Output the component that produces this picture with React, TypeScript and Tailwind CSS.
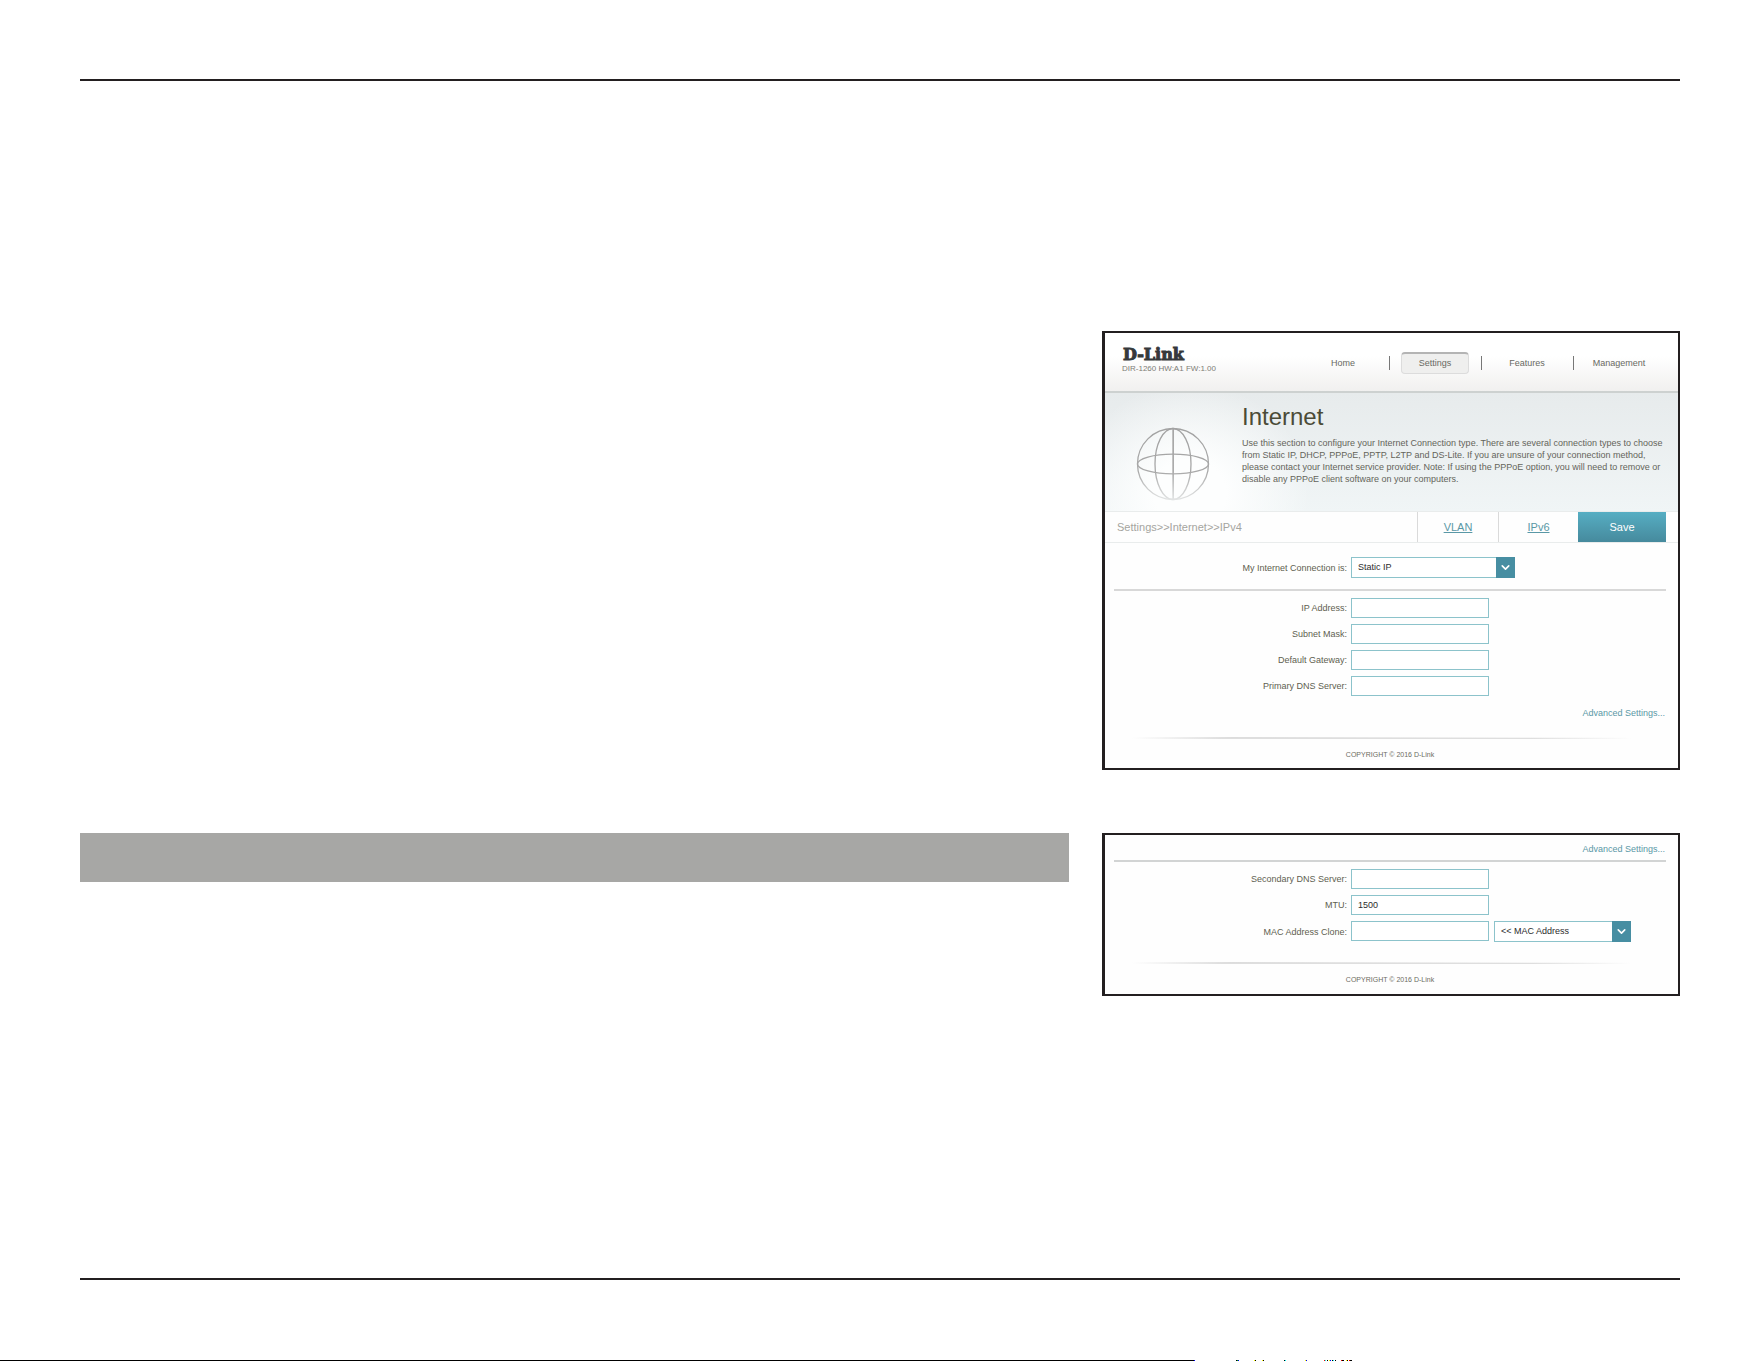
import type { ReactNode } from "react";
import { ChevronDown } from "lucide-react";

const navItems = ["Home", "Settings", "Features", "Management"];

const specks = [
  { x: 0, w: 1, fill: "#0000ff" },
  { x: 42, w: 1, fill: "#000000" },
  { x: 43, w: 1, fill: "#00a000" },
  { x: 44, w: 1, fill: "#0000ff" },
  { x: 60, w: 1, fill: "#ffff00" },
  { x: 61, w: 1, fill: "#000000" },
  { x: 68, w: 1, fill: "#ffff00" },
  { x: 69, w: 1, fill: "#000000" },
  { x: 90, w: 1, fill: "#000000" },
  { x: 91, w: 1, fill: "#00ffff" },
  { x: 111, w: 1, fill: "#ffff00" },
  { x: 112, w: 1, fill: "#0000ff" },
  { x: 130, w: 1, fill: "#ff0000" },
  { x: 131, w: 1, fill: "#00ffff" },
  { x: 133, w: 1, fill: "#000000" },
  { x: 135, w: 1, fill: "#ffff00" },
  { x: 136, w: 1, fill: "#0000ff" },
  { x: 138, w: 1, fill: "#000000" },
  { x: 139, w: 1, fill: "#00ffff" },
  { x: 141, w: 1, fill: "#000000" },
  { x: 147, w: 1, fill: "#ff0000" },
  { x: 148, w: 2, fill: "#000000" },
  { x: 152, w: 1, fill: "#ffff00" },
  { x: 153, w: 1, fill: "#000000" },
  { x: 155, w: 1, fill: "#ff0000" },
  { x: 156, w: 2, fill: "#000000" },
];

const Globe = () => (
  <svg viewBox="0 0 74 74" className="size-[74px]" fill="none" aria-hidden="true">
    <defs>
      <linearGradient id="globe" gradientUnits="userSpaceOnUse" x1="0" y1="0" x2="0" y2="74">
        <stop offset="0" stopColor="#a2a2a2" />
        <stop offset="0.6" stopColor="#a8a8a8" />
        <stop offset="1" stopColor="#e4e6e6" />
      </linearGradient>
    </defs>
    <g stroke="url(#globe)" strokeWidth="1.3">
      <circle cx="37" cy="37" r="35.5" />
      <ellipse cx="37" cy="37" rx="18" ry="35.5" />
      <ellipse cx="37" cy="37" rx="35.5" ry="9.8" />
      <path d="M37 1.5V72.5M37.3 1.5V72.5" />
    </g>
  </svg>
);

const Panel = ({ children }: { children: ReactNode }) => (
  <section className="border-2 border-l-3 border-[#231f20] bg-[#fefefe]">{children}</section>
);

const SelectBox = ({ id, value, className }: { id: string; value: string; className: string }) => (
  <div className={`relative h-[21px] ${className}`}>
    <select
      id={id}
      aria-label={value}
      className="block h-full w-full appearance-none border border-[#8cc3cb] bg-white pl-[6px] text-[9px] text-[#2c2c2c]"
    >
      <option>{value}</option>
    </select>
    <span className="pointer-events-none absolute inset-y-0 right-0 flex w-[19px] items-center justify-center bg-[#478ea2]">
      <ChevronDown size={13} strokeWidth={3} className="text-white" />
    </span>
  </div>
);

const Row = ({ id, label, children }: { id: string; label: string; children: ReactNode }) => (
  <div className="flex items-center">
    <label htmlFor={id} className="w-[242px] text-right text-[9px] leading-3 text-[#5f5f50]">
      {label}
    </label>
    <div className="ml-1 flex gap-[5px]">{children}</div>
  </div>
);

const TextField = ({ id, label, value = "", children }: { id: string; label: string; value?: string; children?: ReactNode }) => (
  <Row id={id} label={label}>
    <input
      id={id}
      type="text"
      defaultValue={value}
      className="h-5 w-[138px] border border-[#8cc3cb] bg-white px-[6px] text-[9px] text-[#2c2c2c]"
    />
    {children}
  </Row>
);

const Copyright = () => (
  <footer className="pl-[27px] pr-[46px]">
    <div className="h-px bg-linear-to-r from-transparent via-[#dcdcdc] via-20% to-transparent" />
    <div className="h-px bg-[linear-gradient(to_right,transparent,#dedede_18%,#dedede_80%,transparent)]" />
    <p className="mt-[11px] pl-4 text-center text-[7px] leading-[10px] text-[#6c6c62]">COPYRIGHT © 2016 D-Link</p>
  </footer>
);

const AdvancedLink = () => (
  <a href="#advanced" className="block pr-[13px] text-right text-[9px] leading-3 text-[#5a98a6]">
    Advanced Settings...
  </a>
);

const InternetPanel = () => (
  <Panel>
    <header className="flex h-[60px] justify-between border-b-2 border-[#cdd1d0] bg-linear-to-b from-white from-40% to-[#f1f0ef] pr-[13px]">
      <div className="pl-[17px] pt-[14px]">
        <div className="pl-px font-['DejaVu_Serif','Liberation_Serif',serif] text-[16px] font-bold leading-4 text-[#36393b] [-webkit-text-stroke:1px_#36393b]">
          D-Link
        </div>
        <div className="mt-px text-[8px] leading-[10px] text-[#7d7d76]">DIR-1260 HW:A1 FW:1.00</div>
      </div>
      <nav className="flex h-[60px] items-center">
        {navItems.map((item, i) => (
          <div key={item} className="relative flex w-[92px] justify-center">
            {i > 0 && <span className="absolute left-0 top-1 h-[14px] w-px bg-[#777]" />}
            <a
              href="#nav"
              className={`flex h-[22px] w-[68px] items-center justify-center text-[9px] leading-3 text-[#696962] ${
                item === "Settings" ? "rounded-sm border border-t-2 border-[#dcdcdc] border-t-[#b4b4b4] bg-[#efefee] pb-px" : ""
              }`}
            >
              {item}
            </a>
          </div>
        ))}
      </nav>
    </header>
    <div className="flex h-[118px] bg-[radial-gradient(ellipse_120px_110px_at_85px_100px,#fdfefe_30%,#fdfefe00),linear-gradient(to_bottom,#e7ebec,#f0f5f6)]">
      <div className="w-[137px] shrink-0 pl-[31px] pt-[34px]">
        <Globe />
      </div>
      <div className="pr-3 pt-[10px]">
        <h1 className="text-[24px] leading-7 text-[#4b4b37]">Internet</h1>
        <p className="mt-[6px] text-[9px] leading-3 text-[#64645a]">
          Use this section to configure your Internet Connection type. There are several connection types to choose
          from Static IP, DHCP, PPPoE, PPTP, L2TP and DS-Lite. If you are unsure of your connection method, please
          contact your Internet service provider. Note: If using the PPPoE option, you will need to remove or disable
          any PPPoE client software on your computers.
        </p>
      </div>
    </div>
    <div className="flex h-8 items-stretch border-y border-[#e9ecec] pr-3 text-[11px]">
      <span className="flex flex-1 items-center pl-3 text-[#a5a5a0]">Settings&gt;&gt;Internet&gt;&gt;IPv4</span>
      <a href="#vlan" className="flex w-[81px] items-center justify-center border-l border-[#dadada] text-[#5a98a6] underline">
        VLAN
      </a>
      <a href="#ipv6" className="flex w-[80px] items-center justify-center border-l border-[#dadada] text-[#5a98a6] underline">
        IPv6
      </a>
      <button type="button" className="w-[88px] bg-linear-to-b from-[#56aec3] to-[#468a9d] text-white">
        Save
      </button>
    </div>
    <div className="pt-[14px]">
      <Row id="connection" label="My Internet Connection is:">
        <SelectBox id="connection" value="Static IP" className="w-[164px]" />
      </Row>
    </div>
    <div className="ml-[9px] mr-3 mt-[11px] h-[2px] bg-[#d8d8d8]" />
    <div className="flex flex-col gap-[6px] pt-[7px]">
      <TextField id="ip" label="IP Address:" />
      <TextField id="subnet" label="Subnet Mask:" />
      <TextField id="gateway" label="Default Gateway:" />
      <TextField id="dns1" label="Primary DNS Server:" />
    </div>
    <div className="pb-[18px] pt-[11px]">
      <AdvancedLink />
    </div>
    <Copyright />
    <div className="h-2" />
  </Panel>
);

const AdvancedPanel = () => (
  <Panel>
    <div className="pt-2">
      <AdvancedLink />
    </div>
    <div className="ml-[9px] mr-3 mt-[5px] h-[2px] bg-[#d2d4d4]" />
    <div className="flex flex-col gap-[6px] pb-5 pt-[7px]">
      <TextField id="dns2" label="Secondary DNS Server:" />
      <TextField id="mtu" label="MTU:" value="1500" />
      <TextField id="mac" label="MAC Address Clone:">
        <SelectBox id="mac-select" value="<< MAC Address" className="w-[137px]" />
      </TextField>
    </div>
    <Copyright />
    <div className="h-[9px]" />
  </Panel>
);

const App = () => {
  return (
    <div className="bg-white font-['Liberation_Sans',Arial,sans-serif]">
      <main className="pl-20 pr-[81px] pt-[79px]">
        <div className="h-[2px] bg-[#231f20]" />
        <div className="grid grid-cols-[989fr_578fr] gap-x-[33px] gap-y-[63px] pb-[282px] pt-[250px]">
          <div />
          <InternetPanel />
          <div className="h-[49px] bg-[#a7a7a5]" />
          <AdvancedPanel />
        </div>
        <div className="h-[2px] bg-[#231f20]" />
      </main>
      <div className="mt-20 flex h-px">
        <div className="w-[67.8%] bg-black" />
        <svg className="h-px w-[160px]" viewBox="0 0 160 1" shapeRendering="crispEdges" aria-hidden="true">
          {specks.map((s) => (
            <rect key={s.x} x={s.x} y="0" width={s.w} height="1" fill={s.fill} />
          ))}
        </svg>
      </div>
    </div>
  );
};
export default App;
